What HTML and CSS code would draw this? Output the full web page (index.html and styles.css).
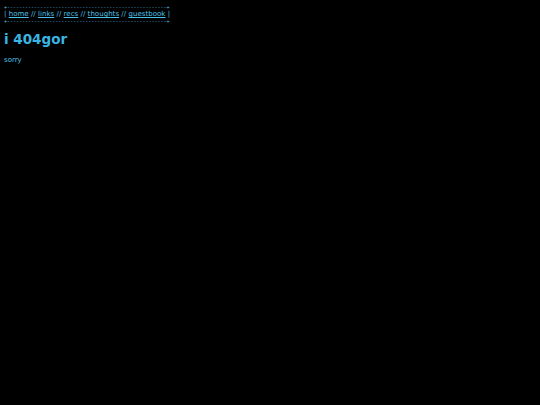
FILE: index.html
```html
<!DOCTYPE html>
<html>
<head>
<meta charset="utf-8">
<link rel="stylesheet" href="styles.css">
</head>
<body>
<div class="nav">
<div class="rule">+-----------------------------------------------------+</div>
<div class="links">| <a href="#">home</a> // <a href="#">links</a> // <a href="#">recs</a> // <a href="#">thoughts</a> // <a href="#">guestbook</a> |</div>
<div class="rule">+-----------------------------------------------------+</div>
</div>
<h1 class="title">i 404gor</h1>
<p class="msg">sorry</p>
</body>
</html>
```
FILE: styles.css
```css
html, body {
  background: #000;
}
body {
  margin: 4px;
  color: #4cc0e8;
  font-family: "DejaVu Sans", Verdana, sans-serif;
}
.nav {
  font-size: 7px;
  line-height: 7px;
  width: max-content;
}
.rule {
  font-family: "DejaVu Sans Mono", monospace;
  font-size: 5px;
  line-height: 6px;
  white-space: pre;
  color: #5ccbee;
}
.links {
  line-height: 8px;
  letter-spacing: 0.04px;
}
.links a {
  color: #4cc0e8;
}
.title {
  font-size: 13.5px;
  font-weight: bold;
  margin: 7px 0 0 0;
  color: #3ab4e2;
}
.msg {
  font-size: 7px;
  margin: 9px 0 0 0;
}
```
